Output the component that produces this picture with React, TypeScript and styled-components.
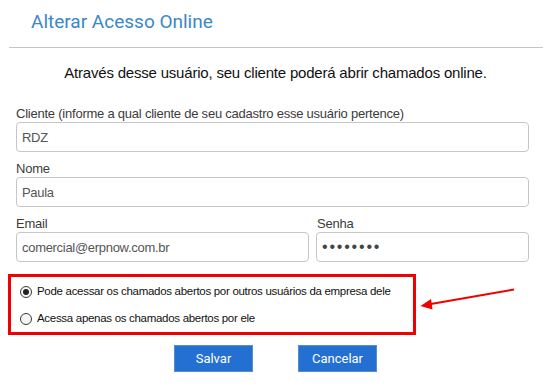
import styled, { createGlobalStyle } from 'styled-components';

const GlobalStyle = createGlobalStyle`
	html, body {
		margin: 0;
		padding: 0;
		background: #fff;
	}
	body {
		font-family: 'Liberation Sans', Arial, sans-serif;
	}
	* {
		box-sizing: border-box;
	}
`;

const Page = styled.div`
	position: relative;
	width: 551px;
	height: 387px;
	overflow: hidden;
`;

const Header = styled.div`
	margin: 0 8px 0 9px;
	padding: 11px 0 15px 22px;
	border-bottom: 1px solid #c4c4c4;
`;

const Title = styled.h1`
	margin: 0;
	font-family: Roboto, sans-serif;
	font-size: 19px;
	line-height: 21px;
	font-weight: 400;
	color: #3b87c8;
`;

const Intro = styled.p`
	margin: 16px 0 0 0;
	text-align: center;
	font-size: 15px;
	letter-spacing: -0.2px;
	line-height: 18px;
	color: #111;
`;

const Form = styled.div`
	padding: 24px 22px 0 16px;
	display: flex;
	flex-direction: column;
	gap: 9px;
`;

const Row = styled.div`
	display: grid;
	grid-template-columns: 293px 213px;
	column-gap: 7px;
`;

const Field = styled.label<{ $shift?: number }>`
	display: flex;
	flex-direction: column;

	span {
		font-size: 13px;
		letter-spacing: -0.23px;
		line-height: 16px;
		color: #3c3c3c;
		padding-left: ${(p) => p.$shift ?? 0}px;
	}
`;

const Input = styled.input`
	height: 30px;
	width: 100%;
	margin: 0;
	padding: 0 5px;
	border: 1px solid #c6c6c6;
	border-radius: 4px;
	font-family: 'Liberation Sans', Arial, sans-serif;
	font-size: 13px;
	letter-spacing: -0.3px;
	color: #555;
	background: #fff;
	outline: none;

	&[type='password'] {
		font-size: 16px;
		letter-spacing: 1.8px;
		color: #444;
	}
`;

const Options = styled.div`
	margin: 12px 0 0 8px;
	width: 408px;
	height: 61px;
	border: 3px solid #f00000;
	padding: 0 0 0 9px;
`;

const Option = styled.div`
	display: flex;
	align-items: center;
	height: 27px;
	font-size: 11.5px;
	letter-spacing: -0.3px;
	white-space: nowrap;
	color: #111;
`;

const Radio = styled.span<{ $checked?: boolean }>`
	position: relative;
	width: 12px;
	height: 12px;
	margin: 2px 5px 0 0;
	border-radius: 50%;
	border: 1px solid #3a3a3a;
	background: #f6f6f6;
	flex-shrink: 0;

	&::after {
		content: '';
		display: ${(p) => (p.$checked ? 'block' : 'none')};
		position: absolute;
		top: 2px;
		left: 2px;
		width: 6px;
		height: 6px;
		border-radius: 50%;
		background: #222;
	}
`;

const Actions = styled.div`
	display: flex;
	justify-content: center;
	gap: 45px;
	margin-top: 10px;
`;

const Button = styled.button`
	width: 79px;
	height: 27px;
	margin: 0;
	padding: 0;
	border: 1px solid #5a8ccb;
	background: #2470d2;
	color: #fff;
	font-family: Roboto, sans-serif;
	font-size: 13px;
`;

const Arrow = styled.svg`
	position: absolute;
	left: 410px;
	top: 280px;
`;

export default function App() {
	return (
		<Page>
			<GlobalStyle />
			<Header>
				<Title>Alterar Acesso Online</Title>
			</Header>
			<Intro>Através desse usuário, seu cliente poderá abrir chamados online.</Intro>
			<Form>
				<Field>
					<span>Cliente (informe a qual cliente de seu cadastro esse usuário pertence)</span>
					<Input defaultValue='RDZ' />
				</Field>
				<Field>
					<span>Nome</span>
					<Input defaultValue='Paula' />
				</Field>
				<Row>
					<Field>
						<span>Email</span>
						<Input defaultValue='comercial@erpnow.com.br' />
					</Field>
					<Field $shift={1}>
						<span>Senha</span>
						<Input type='password' defaultValue='12345678' />
					</Field>
				</Row>
			</Form>
			<Options>
				<Option>
					<Radio $checked />
					Pode acessar os chamados abertos por outros usuários da empresa dele
				</Option>
				<Option>
					<Radio />
					Acessa apenas os chamados abertos por ele
				</Option>
			</Options>
			<Actions>
				<Button>Salvar</Button>
				<Button>Cancelar</Button>
			</Actions>
			<Arrow width='110' height='35' viewBox='410 280 110 35'>
				<line x1='514' y1='289.5' x2='428' y2='304.5' stroke='#f00000' strokeWidth='2' />
				<polygon points='420.5,306 431,299 432.5,309.5' fill='#f00000' />
			</Arrow>
		</Page>
	);
}
